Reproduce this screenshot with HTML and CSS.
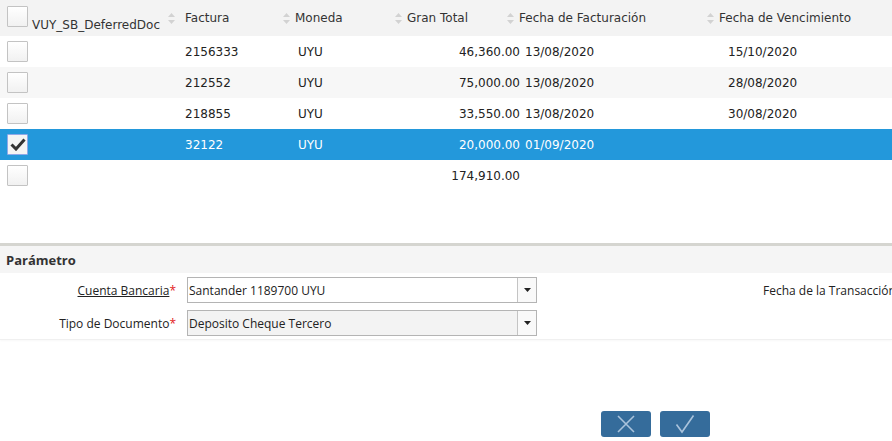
FILE: index.html
```html
<!DOCTYPE html>
<html lang="es">
<head>
<meta charset="utf-8">
<title>Documentos diferidos</title>
<link rel="stylesheet" href="styles.css">
</head>
<body>
<div class="grid">
  <div class="head">
    <div class="hcell first">
      <span class="cb"></span>
      <span class="htext vuy">VUY_SB_DeferredDoc</span>
    </div>
    <div class="hcell fac"><span class="sort"><svg width="7" height="11" viewBox="0 0 7 11"><path d="M3.5 0L7 4H0z M3.5 11L7 7H0z" fill="#d2d2d2"/></svg></span><span class="htext">Factura</span></div>
    <div class="hcell"><span class="sort"><svg width="7" height="11" viewBox="0 0 7 11"><path d="M3.5 0L7 4H0z M3.5 11L7 7H0z" fill="#d2d2d2"/></svg></span><span class="htext">Moneda</span></div>
    <div class="hcell"><span class="sort"><svg width="7" height="11" viewBox="0 0 7 11"><path d="M3.5 0L7 4H0z M3.5 11L7 7H0z" fill="#d2d2d2"/></svg></span><span class="htext">Gran Total</span></div>
    <div class="hcell"><span class="sort"><svg width="7" height="11" viewBox="0 0 7 11"><path d="M3.5 0L7 4H0z M3.5 11L7 7H0z" fill="#d2d2d2"/></svg></span><span class="htext">Fecha de Facturación</span></div>
    <div class="hcell"><span class="sort"><svg width="7" height="11" viewBox="0 0 7 11"><path d="M3.5 0L7 4H0z M3.5 11L7 7H0z" fill="#d2d2d2"/></svg></span><span class="htext">Fecha de Vencimiento</span></div>
  </div>
  <div class="body">
    <div class="row">
      <div class="c-cb"><span class="cb"></span></div>
      <div class="c-fac">2156333</div>
      <div class="c-mon">UYU</div>
      <div class="c-tot">46,360.00</div>
      <div class="c-ff">13/08/2020</div>
      <div class="c-fv">15/10/2020</div>
    </div>
    <div class="row alt">
      <div class="c-cb"><span class="cb"></span></div>
      <div class="c-fac">212552</div>
      <div class="c-mon">UYU</div>
      <div class="c-tot">75,000.00</div>
      <div class="c-ff">13/08/2020</div>
      <div class="c-fv">28/08/2020</div>
    </div>
    <div class="row">
      <div class="c-cb"><span class="cb"></span></div>
      <div class="c-fac">218855</div>
      <div class="c-mon">UYU</div>
      <div class="c-tot">33,550.00</div>
      <div class="c-ff">13/08/2020</div>
      <div class="c-fv">30/08/2020</div>
    </div>
    <div class="row selected">
      <div class="c-cb"><span class="cb checked"><svg width="16" height="13" viewBox="0 0 16 13"><path d="M1.5 6.5l4.5 4.5L14.5 1.5" fill="none" stroke="#333" stroke-width="3"/></svg></span></div>
      <div class="c-fac">32122</div>
      <div class="c-mon">UYU</div>
      <div class="c-tot">20,000.00</div>
      <div class="c-ff">01/09/2020</div>
      <div class="c-fv"></div>
    </div>
    <div class="row">
      <div class="c-cb"><span class="cb"></span></div>
      <div class="c-fac"></div>
      <div class="c-mon"></div>
      <div class="c-tot">174,910.00</div>
      <div class="c-ff"></div>
      <div class="c-fv"></div>
    </div>
  </div>
</div>

<div class="params">
  <div class="params-title">Parámetro</div>
  <div class="params-body">
    <div class="prow">
      <label class="plabel"><span class="ul">Cuenta Bancaria</span><span class="req">*</span></label>
      <div class="combo">
        <span class="combo-text">Santander 1189700 UYU</span>
        <span class="combo-btn"><svg width="7" height="4" viewBox="0 0 7 4"><path d="M0 0h7L3.5 4z" fill="#222"/></svg></span>
      </div>
      <div class="pside">Fecha de la Transacción</div>
    </div>
    <div class="prow">
      <label class="plabel">Tipo de Documento<span class="req">*</span></label>
      <div class="combo ro">
        <span class="combo-text">Deposito Cheque Tercero</span>
        <span class="combo-btn"><svg width="7" height="4" viewBox="0 0 7 4"><path d="M0 0h7L3.5 4z" fill="#222"/></svg></span>
      </div>
      <div class="pside"></div>
    </div>
  </div>
</div>

<div class="actions">
  <button class="btn" aria-label="Cancelar"><svg width="20" height="20" viewBox="0 0 20 20"><path d="M2 2L18 18M18 2L2 18" stroke="#aac3dc" stroke-width="1.6" fill="none"/></svg></button>
  <button class="btn" aria-label="Aceptar"><svg width="20" height="20" viewBox="0 0 20 20"><path d="M1.5 10.5L7 18L18.5 1.5" stroke="#aac3dc" stroke-width="1.6" fill="none"/></svg></button>
</div>
</body>
</html>
```

FILE: styles.css
```css
* { box-sizing: border-box; }
html, body { margin: 0; padding: 0; background: #fff; }
body {
  width: 892px;
  height: 441px;
  overflow: hidden;
  font-family: "DejaVu Sans", Verdana, sans-serif;
  font-size: 12px;
  color: #222;
}

.grid { width: 892px; }

.head {
  height: 36px;
  background: #f3f3f3;
  display: grid;
  grid-template-columns: 167px 115px 112px 112px 200px 1fr;
}
.hcell {
  display: flex;
  align-items: center;
  gap: 5px;
  padding-left: 1px;
  color: #333;
  white-space: nowrap;
  min-width: 0;
}
.hcell > * { flex-shrink: 0; }
.hcell.fac { gap: 10px; }
.hcell.first {
  align-items: flex-start;
  padding: 6px 0 0 7px;
  gap: 0;
}
.htext.vuy { margin: 12px 0 0 4px; }
.sort { display: inline-flex; }

.cb {
  display: inline-flex;
  align-items: center;
  justify-content: center;
  flex-shrink: 0;
  width: 21px;
  height: 21px;
  border: 1px solid #c3c3c3;
  background: linear-gradient(#fff, #f1f1f1);
  border-radius: 1px;
}
.cb.checked {
  border-color: #8fa8e8;
  background: #f4f4f4;
}

.row {
  height: 31px;
  display: grid;
  grid-template-columns: 185px 113px 112px 110px 206px 1fr;
  align-items: center;
  white-space: nowrap;
}
.row.alt { background: #f7f7f7; }
.row.selected { background: #2398db; color: #fff; }
.c-cb { padding-left: 7px; display: flex; }
.c-tot { text-align: right; }
.c-ff { padding-left: 5px; }
.c-fv { padding-left: 2px; }

.body { height: 207px; }

.params {
  border-top: 3px solid #d5d5d0;
  font-family: "Open Sans", sans-serif;
  font-size: 12px;
  color: #222;
  border-bottom: 1px solid #f0f0f0;
  box-shadow: 0 1px 2px rgba(0,0,0,0.03);
}
.params-title {
  height: 27px;
  background: #f5f5f5;
  font-weight: bold;
  font-size: 13px;
  color: #333;
  padding-left: 6px;
  display: flex;
  align-items: center;
}
.params-body {
  padding: 4px 0 3px;
  display: flex;
  flex-direction: column;
  gap: 7px;
}
.prow {
  display: grid;
  grid-template-columns: 176px 350px 1fr;
  column-gap: 11px;
  align-items: center;
  height: 26px;
}
.plabel { text-align: right; white-space: nowrap; }
.ul { text-decoration: underline; }
.req { color: #e21a1a; }
.combo {
  height: 26px;
  display: flex;
  border: 1px solid #b4b4b4;
  background: #fff;
}
.combo.ro { background: #f3f3f3; }
.combo-text {
  flex: 1;
  padding-left: 1px;
  display: flex;
  align-items: center;
  white-space: nowrap;
}
.combo-btn {
  width: 19px;
  border-left: 1px solid #c4c4c4;
  background: #f9f9f9;
  display: flex;
  align-items: center;
  justify-content: center;
}
.pside {
  padding-left: 215px;
  white-space: nowrap;
}

.actions {
  display: flex;
  gap: 9px;
  padding: 71px 0 0 601px;
}
.btn {
  width: 50px;
  height: 26px;
  border: none;
  border-radius: 3px;
  background: #356c9b;
  display: flex;
  align-items: center;
  justify-content: center;
  padding: 0;
}
```
